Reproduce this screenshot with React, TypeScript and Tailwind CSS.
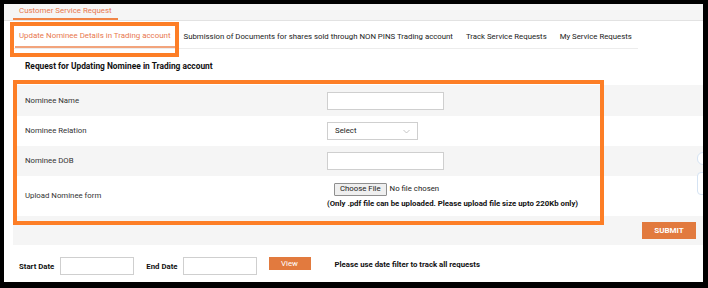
import React from "react";

const tabs = [
  "Submission of Documents for shares sold through NON PINS Trading account",
  "Track Service Requests",
  "My Service Requests",
];

function Row({ label, gray, h, children }: { label: string; gray?: boolean; h: string; children: React.ReactNode }) {
  return (
    <div className={`flex items-center ${h} ${gray ? "bg-[#f5f5f5]" : "bg-white"}`}>
      <div className="w-[314px] pl-[12px] text-[7.8px] text-[#333]">{label}</div>
      <div className="flex-1">{children}</div>
    </div>
  );
}

export default function App() {
  return (
    <div className="w-[708px] h-[288px] bg-black pl-[4px] pt-[4px] pr-[5px] pb-[6px] font-['Roboto',sans-serif]">
      <div className="relative h-full bg-white overflow-hidden">
        {/* header band */}
        <div className="h-[17px] bg-[#f5f5f5] border-b border-[#e2e2e2] pl-[9px] flex items-end">
          <div className="h-full px-[6px] border-b-[2px] border-[#f08447] flex items-center text-[7.9px] text-[#e8784e] whitespace-nowrap">
            Customer Service Request
          </div>
        </div>

        {/* tabs */}
        <div className="ml-[9px] w-[625px] h-[28px] border-b border-[#ececec] flex items-end gap-[5px] whitespace-nowrap">
          <div className="shrink-0 ml-[2px] h-[22px] px-[4px] border-b-[2px] border-[#f2a47c] flex items-center text-[7.9px] text-[#e8784e]">
            Update Nominee Details in Trading account
          </div>
          {tabs.map((t) => (
            <div key={t} className="shrink-0 h-[22px] px-[4px] flex items-center text-[7.8px] text-[#222]">
              {t}
            </div>
          ))}
        </div>

        {/* title */}
        <div className="pl-[21px] h-[34px] flex items-center text-[8.4px] font-bold text-[#111]">
          Request for Updating Nominee in Trading account
        </div>

        {/* form */}
        <div className="ml-[9px] mt-[2px]">
          <Row label="Nominee Name" gray h="h-[31px]">
            <div className="w-[117px] h-[18px] border border-[#cfcfcf] bg-white" />
          </Row>
          <Row label="Nominee Relation" h="h-[30px]">
            <div className="w-[91px] h-[18px] border border-[#cfcfcf] bg-white flex items-center justify-between pl-[7px] pr-[7px] text-[7.8px] text-[#222]">
              <span>Select</span>
              <svg width="7" height="5" viewBox="0 0 7 5" fill="none">
                <path d="M0.5 1 L3.5 4 L6.5 1" stroke="#b8b8b8" strokeWidth="0.8" />
              </svg>
            </div>
          </Row>
          <Row label="Nominee DOB" gray h="h-[30px]">
            <div className="w-[117px] h-[18px] border border-[#cfcfcf] bg-white" />
          </Row>
          <Row label="Upload Nominee form" h="h-[40px]">
            <div className="flex flex-col whitespace-nowrap">
              <div className="flex items-center pl-[7px] text-[7.8px] text-[#222]">
                <div className="h-[13px] px-[5px] border border-[#8f8f8f] bg-[#efefef] rounded-[1px] flex items-center">
                  Choose File
                </div>
                <span className="ml-[3px]">No file chosen</span>
              </div>
              <div className="mt-[2px] text-[7.8px] font-bold text-[#111]">
                (Only .pdf file can be uploaded. Please upload file size upto 220Kb only)
              </div>
            </div>
          </Row>
          <div className="h-[29px] bg-[#f5f5f5] flex items-start justify-end pr-[7px] pt-[6px]">
            <div className="w-[54px] h-[17px] bg-[#e27a3e] text-white text-[8px] font-bold flex items-center justify-center">
              SUBMIT
            </div>
          </div>
        </div>

        {/* date filter */}
        <div className="flex items-start pl-[15px] pt-[12px] text-[7.8px] font-bold text-[#111] whitespace-nowrap">
          <span className="mt-[4px]">Start Date</span>
          <div className="ml-[6px] w-[74px] h-[18px] border border-[#cfcfcf] bg-white" />
          <span className="ml-[12px] mt-[4px]">End Date</span>
          <div className="ml-[5px] w-[74px] h-[18px] border border-[#cfcfcf] bg-white" />
          <div className="ml-[12px] w-[42px] h-[13px] bg-[#e27a3e] text-white font-normal flex items-center justify-center">
            View
          </div>
          <span className="ml-[24px] mt-[2px]">Please use date filter to track all requests</span>
        </div>

        {/* partial element at right edge */}
        <div className="absolute left-[693px] top-[148px] w-[12px] h-[13px] rounded-full border border-[#d5e3f3] bg-white" />
        <div className="absolute left-[693px] top-[168px] w-[12px] h-[23px] rounded-[4px] border border-[#d5e3f3] bg-white" />

        {/* annotation boxes */}
        <div className="absolute left-[6px] top-[18px] w-[169px] h-[35px] border-[4px] border-[#fd7e26]" />
        <div className="absolute left-[9px] top-[76px] w-[591px] h-[145px] border-[4px] border-[#fd7e26]" />
      </div>
    </div>
  );
}
